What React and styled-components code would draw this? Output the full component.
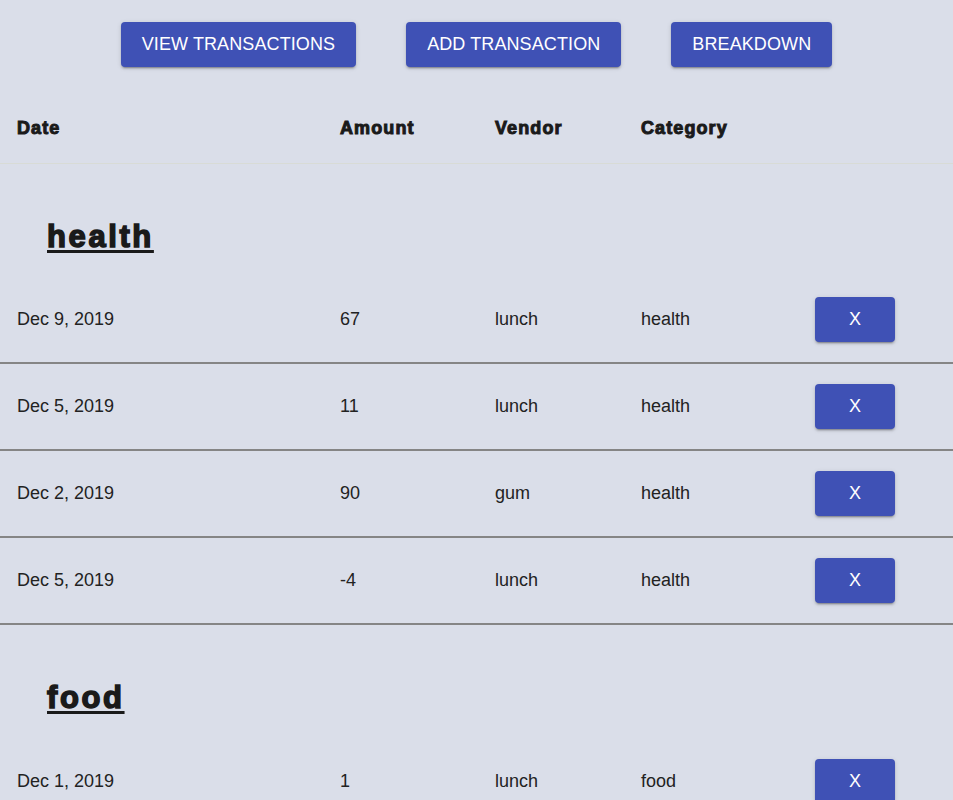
import React from "react";
import styled, { createGlobalStyle } from "styled-components";

const Global = createGlobalStyle`
  html, body { margin: 0; padding: 0; background: #dadee9; }
  body { font-family: "Liberation Sans", Arial, sans-serif; color: #222; }
`;

const Page = styled.div`
  background: #dadee9;
  min-height: 800px;
`;

const Toolbar = styled.div`
  display: flex;
  justify-content: center;
  gap: 50px;
  padding: 22px 0 25px;
`;

const Button = styled.button`
  font-family: "Liberation Sans", Arial, sans-serif;
  font-size: 18px;
  line-height: 33px;
  height: 45px;
  padding: 0 ${(p) => (p.$small ? 0 : 21)}px;
  width: ${(p) => (p.$small ? "80px" : "auto")};
  letter-spacing: ${(p) => (p.$small ? 0 : 0.1)}px;
  background: #3f51b5;
  color: #fff;
  border: none;
  border-radius: 4px;
  text-transform: uppercase;
  box-shadow: 0 3px 1px -2px rgba(0,0,0,0.2), 0 2px 2px 0 rgba(0,0,0,0.14), 0 1px 5px 0 rgba(0,0,0,0.12);
  cursor: pointer;
`;

const Grid = styled.div`
  display: grid;
  grid-template-columns: 323px 155px 146px 174px 1fr;
  align-items: center;
  padding-left: 17px;
`;

const HeaderRow = styled(Grid)`
  height: 70px;
  padding-top: 1px;
  border-bottom: 1px solid #d8dbd6;
`;

const HeadCell = styled.div`
  font-size: 18px;
  font-weight: 700;
  letter-spacing: 1.1px;
  -webkit-text-stroke: 1px #1a1a1a;
  color: #1a1a1a;
`;

const GroupTitle = styled.h2`
  margin: 0;
  padding: 55px 0 22px 47px;
  line-height: 36px;
  font-size: 31px;
  font-weight: 700;
  letter-spacing: 2.6px;
  -webkit-text-stroke: 1.5px #1a1a1a;
  color: #1a1a1a;
  text-decoration: underline;
  text-decoration-thickness: 3px;
  text-underline-offset: 3px;
`;

const Row = styled(Grid)`
  height: 87px;
  box-sizing: border-box;
  border-bottom: ${(p) => (p.$last ? "none" : "2px solid #858585")};
`;

const Cell = styled.div`
  font-size: 18px;
  color: #222;
`;

const groups = [
  {
    name: "health",
    rows: [
      ["Dec 9, 2019", "67", "lunch", "health"],
      ["Dec 5, 2019", "11", "lunch", "health"],
      ["Dec 2, 2019", "90", "gum", "health"],
      ["Dec 5, 2019", "-4", "lunch", "health"],
    ],
  },
  {
    name: "food",
    rows: [["Dec 1, 2019", "1", "lunch", "food"]],
  },
];

export default function App() {
  return (
    <Page>
      <Global />
      <Toolbar>
        <Button>View Transactions</Button>
        <Button>Add Transaction</Button>
        <Button>Breakdown</Button>
      </Toolbar>
      <HeaderRow>
        <HeadCell>Date</HeadCell>
        <HeadCell>Amount</HeadCell>
        <HeadCell>Vendor</HeadCell>
        <HeadCell>Category</HeadCell>
        <div />
      </HeaderRow>
      {groups.map((g, gi) => (
        <section key={g.name}>
          <GroupTitle>{g.name}</GroupTitle>
          {g.rows.map((r, i) => (
            <Row key={i} $last={gi === groups.length - 1 && i === g.rows.length - 1}>
              <Cell>{r[0]}</Cell>
              <Cell>{r[1]}</Cell>
              <Cell>{r[2]}</Cell>
              <Cell>{r[3]}</Cell>
              <div>
                <Button $small>X</Button>
              </div>
            </Row>
          ))}
        </section>
      ))}
    </Page>
  );
}
